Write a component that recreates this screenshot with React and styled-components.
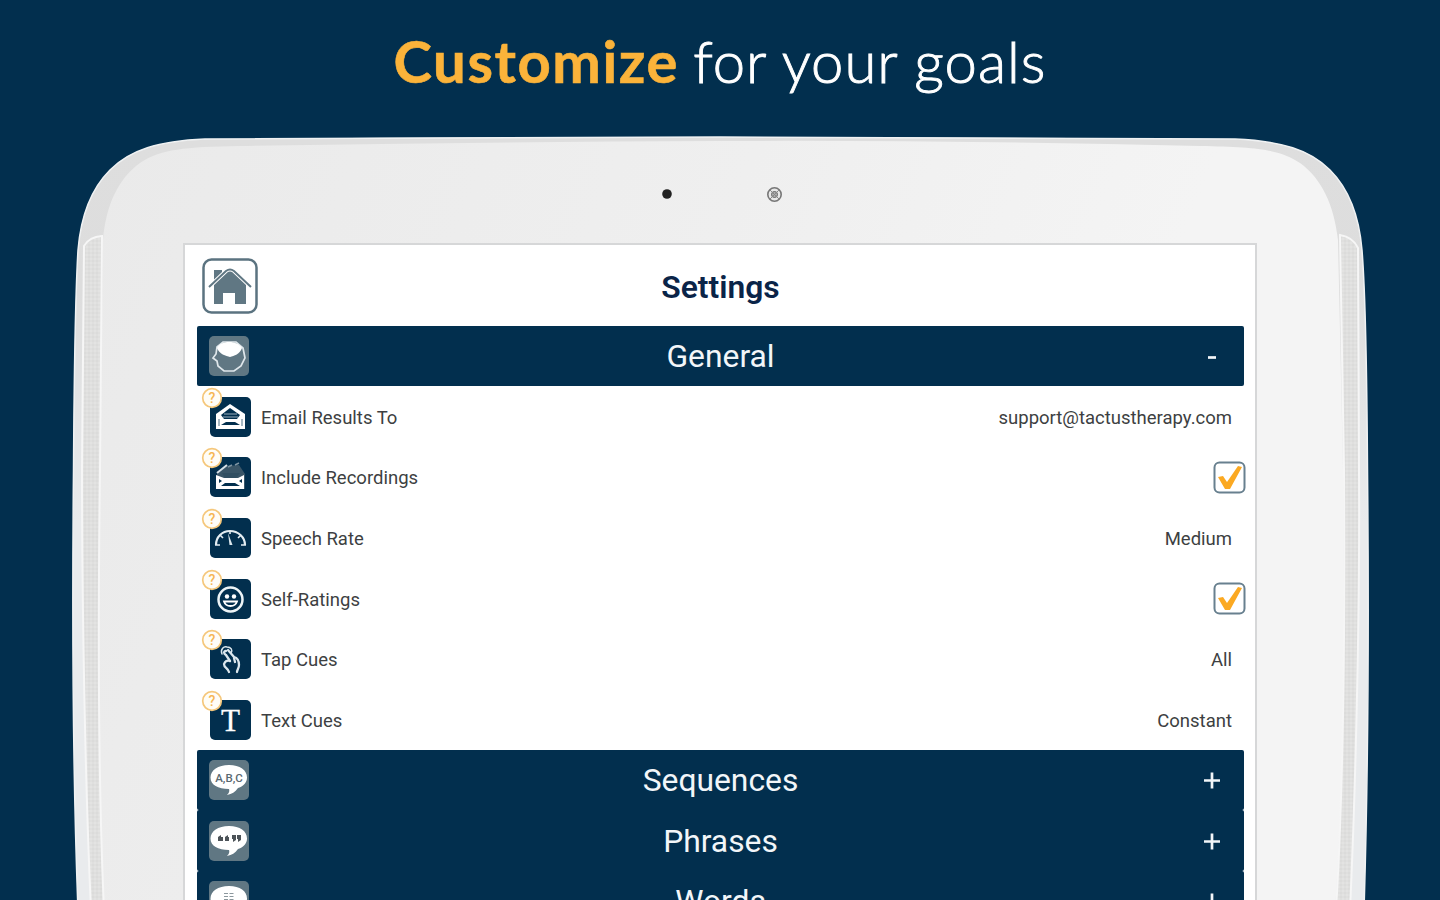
import React, { Fragment } from 'react'
import styled, { createGlobalStyle } from 'styled-components'

const NAVY = '#022f4e'
const SLATE = '#607783'
const ORANGE = '#fbb33a'

const GlobalStyle = createGlobalStyle`
  * {
    box-sizing: border-box;
  }
  body {
    margin: 0;
    background: ${NAVY};
    overflow: hidden;
  }
`
const Page = styled.main`
  display: flex;
  flex-direction: column;
  width: 1440px;
  height: 900px;
  overflow: hidden;
  background: ${NAVY};
  font-family: Roboto, 'Liberation Sans', sans-serif;
`
const Headline = styled.h1`
  display: flex;
  justify-content: center;
  gap: 14px;
  margin: 0;
  height: 130px;
  line-height: 122px;
  font-family: Lato, sans-serif;
  font-size: 58px;
  font-weight: 300;
  white-space: nowrap;
  color: #fff;
`
const Strong = styled.strong`
  font-weight: 700;
  letter-spacing: 1.6px;
  -webkit-text-stroke: 0.6px ${ORANGE};
  color: ${ORANGE};
`
const Rest = styled.span`
  letter-spacing: 1px;
  -webkit-text-stroke: 0.9px #fff;
`
const Tablet = styled.section`
  position: relative;
  flex: none;
  height: 770px;
  padding: 113px 183px 0;
`
const Body = styled.svg`
  position: absolute;
  top: 0;
  left: 0;
`
const Screen = styled.div`
  position: relative;
  width: 1074px;
  height: 657px;
  overflow: hidden;
  padding: 0 11px 0 12px;
  border: 2px solid #d6d7d8;
  border-bottom: 0;
  background: #fff;
`
const TopBar = styled.header`
  display: grid;
  grid-template-columns: 66px 1fr 66px;
  align-items: center;
  height: 81px;
`
const HomeButton = styled.button`
  width: 56px;
  height: 56px;
  margin-left: 5px;
  padding: 0;
  border: 0;
  background: none;
`
const Title = styled.h2`
  margin: 3px 0 0;
  font-size: 31.8px;
  font-weight: 600;
  text-align: center;
  color: #0a2448;
`
const Section = styled.div`
  display: grid;
  grid-template-columns: 66px 1fr 66px;
  align-items: center;
  height: ${props => props.$open ? 60 : 60.4}px;
  border-radius: 2px;
  color: #f2f6f9;
  background: ${NAVY};
`
const SectionIcon = styled.svg`
  width: 40px;
  height: 40px;
  margin: 0 0 0 12px;
`
const SectionName = styled.span`
  font-size: 31.8px;
  line-height: 36px;
  text-align: center;
`
const Toggle = styled.svg`
  width: 20px;
  height: 20px;
  margin-left: 24px;
`
const Row = styled.div`
  display: flex;
  align-items: center;
  height: 60.66px;
  padding: 1px 0 0 13px;
  font-size: 18.5px;
  color: #3d3f42;
`
const Tile = styled.div`
  position: relative;
  width: 41px;
  height: 40px;
  margin-right: 10px;
`
const Help = styled.svg`
  position: absolute;
  top: -10px;
  left: -9px;
`
const Label = styled.span`
  flex: 1;
  padding-top: 2px;
`
const Value = styled.span`
  margin-right: 12px;
  padding-top: 2px;
`
const Check = styled.svg`
  width: 33px;
  height: 33px;
  margin-right: -2px;
`

const glyphs = {
  mail: (
    <Fragment>
      <path d='M6 17 20 7l15 10v15H6z' fill='#fff' />
      <path d='M11 18 20 11l10 7-3 4H14z' fill={NAVY} />
      <path d='M14 17h13M13 20h15' stroke='#9cb0bd' strokeWidth='1' />
      <path d='M9 22v7M32 22v7' stroke='#8ba1b0' strokeWidth='1.5' />
      <path d='m11 28 5-3h9l5 3z' fill={NAVY} />
    </Fragment>
  ),
  recordings: (
    <Fragment>
      <path d='m7 17 10-8 12-1 6 9v15H6z' fill='#3a5668' />
      <path d='m7 16 10-8' stroke='#d6e0e6' strokeWidth='2' />
      <path d='M18 10l4-2M25 8l4-2' stroke='#7d93a1' strokeWidth='1.5' />
      <path d='m6 18 8 3h14l6-3v14H6z' fill='#fff' />
      <path d='M12 16h18l-4 5H15z' fill='#314f62' />
      <path d='m11 29 4-3h10l5 3zM9 22l3 2-3 2zM32 22l-3 2 3 2z' fill={NAVY} />
    </Fragment>
  ),
  gauge: (
    <Fragment>
      <path d='M6 27c0-8 6-14 14-14s15 6 15 14' fill='none' stroke='#e4edf2' strokeWidth='2.2' />
      <path d='M5 27h5M31 27h5M10 17l3 3M31 17l-3 3M20 13v3' stroke='#e4edf2' strokeWidth='1.6' />
      <path d='m18 15 1.5 12h3z' fill='#dbe6ec' />
    </Fragment>
  ),
  smile: (
    <Fragment>
      <circle cx='20.5' cy='20.5' r='12' fill='none' stroke='#edf4f7' strokeWidth='2.5' />
      <circle cx='17' cy='17.500' r='2.2' fill='#fff' />
      <circle cx='24' cy='17.500' r='2.2' fill='#fff' />
      <path d='M14 22.500c2 6 11 6 13 0z' fill='none' stroke='#fff' strokeWidth='1.8' />
    </Fragment>
  ),
  tap: (
    <g fill='none' stroke='#dce7ed' strokeWidth='2.3' strokeLinecap='round'>
      <path d='M12 15c-2-5 2-8 5-7 4 0 6 3 4 6' strokeWidth='1.5' />
      <path d='M16 12c-3 0-2 3 0 4l4 6M18 11l6 7c4 1 5 4 5 8 0 3-2 5-2 7' />
      <path d='M20 22c-3-1-5 0-6 3 0 4 4 4 5 8M24 19l1 4' />
    </g>
  ),
  text: (
    <text x='20.5' y='30.5' textAnchor='middle' fontFamily='Liberation Serif, serif' fontSize='31' fill='#fff' stroke='#fff' strokeWidth='.3' textLength='19' lengthAdjust='spacingAndGlyphs'>T</text>
  )
}

const rows = [
  { icon: 'mail', label: 'Email Results To', value: 'support@tactustherapy.com' },
  { icon: 'recordings', label: 'Include Recordings', checked: true },
  { icon: 'gauge', label: 'Speech Rate', value: 'Medium' },
  { icon: 'smile', label: 'Self-Ratings', checked: true },
  { icon: 'tap', label: 'Tap Cues', value: 'All' },
  { icon: 'text', label: 'Text Cues', value: 'Constant' }
]

const sections = [
  { name: 'Sequences', mark: 'letters' },
  { name: 'Phrases', mark: 'quotes' },
  { name: 'Words', mark: 'lines' }
]

const marks = {
  letters: <text x='20' y='21.500' textAnchor='middle' fontSize='11.500' fontWeight='500' fill='#596971'>A,B,C</text>,
  quotes: <path d='M9 20v-4l3-2v2h2v4zM16 20v-4l3-2v2h1v4zM23 14h4v5l-3 2v-3h-1zM28 14h4v5l-3 2v-3h-1z' fill='#4c5358' />,
  lines: <path d='M15 12.500h10M15 15.500h10M15 18.500h10' stroke='#8b979d' strokeWidth='1.200' strokeDasharray='4 1.500' />
}

const TabletBody = () => (
  <Body width='1440' height='770' viewBox='0 130 1440 770'>
    <defs>
      <linearGradient id='face' x1='0' y1='0' x2='1' y2='.25'>
        <stop offset='0' stopColor='#eaeaea' />
        <stop offset='.5' stopColor='#efefef' />
        <stop offset='.85' stopColor='#f4f4f4' />
      </linearGradient>
      <linearGradient id='rim' x1='0' y1='0' x2='0' y2='1'>
        <stop offset='0' stopColor='#dedede' />
        <stop offset='.2' stopColor='#dddddd' />
        <stop offset='.5' stopColor='#e9ebed' />
      </linearGradient>
      <pattern id='mesh' width='4' height='4' patternUnits='userSpaceOnUse'>
        <rect width='4' height='4' fill='#dfdfde' />
        <circle cx='1' cy='1' r='.8' fill='#d7d7d6' />
        <circle cx='3' cy='3' r='.8' fill='#e9e9e8' />
      </pattern>
    </defs>
    <path
      d='M78 910C73 780 72 620 73.500 470C74 390 75 300 78 250C81 214 92 188 110 170C130 150 158 141 205 139Q460 137 720 137T1235 139C1282 141 1310 150 1330 170C1348 188 1359 214 1362 250C1366 300 1367 390 1367.500 470C1369 620 1368 780 1364 910Z'
      fill='url(#rim)' stroke='#f0f2f3' strokeWidth='1.500'
    />
    <path
      d='M104 910C97 780 98 620 100 470L103 240C106 205 118 179 140 163C161 149 185 147 240 146Q480 142 720 141T1200 146C1255 147 1279 149 1300 163C1322 179 1334 205 1338 240L1343 470C1344 620 1344 780 1335 910Z'
      fill='url(#face)'
    />
    <path d='M91 910C85 780 82 600 82 470L84 246Q89 237 102 236L100 470C98 620 98 780 104 910Z' fill='url(#mesh)' stroke='#f6f6f6' strokeWidth='2' />
    <path d='M1350 910C1356 780 1360 600 1359 470L1358 248Q1353 237 1340 235L1344 470C1345 620 1344 780 1336 910Z' fill='url(#mesh)' stroke='#f6f6f6' strokeWidth='2' />
    <circle cx='667' cy='194' r='4.800' fill='#222' />
    <circle cx='774.500' cy='194.500' r='6.700' fill='#e8e8e8' stroke='#777' strokeWidth='1.600' />
    <circle cx='774.500' cy='194.500' r='3' fill='#aaa' stroke='#666' />
    <path d='m770 190 9 9m0-9-9 9' stroke='#888' />
  </Body>
)

const HomeIcon = () => (
  <svg width='56' height='56' viewBox='0 0 56 56'>
    <rect x='1.5' y='1.500' width='53' height='53' rx='8' fill='#fff' stroke='#5b7380' strokeWidth='2.500' />
    <path d='M12 12h8v5l8-6 16 14v21H33V35H21v11H12z' fill={SLATE} />
    <path d='M7 29 24 13q4-3 8 0l17 16' fill='none' stroke='#fff' strokeWidth='4' />
    <path d='M7 29 24 13q4-3 8 0l17 16' fill='none' stroke={SLATE} strokeWidth='2' />
  </svg>
)

const GeneralIcon = () => (
  <SectionIcon viewBox='0 0 40 40'>
    <rect width='40' height='40' rx='5' fill={SLATE} />
    <path d='m8 11 6-5h13l7 6 2 10-4 8-7 5H15l-6-5-1-5-4-3 3-4z' fill='none' stroke='#dfe7eb' strokeWidth='1.700' />
    <path d='M8 12C12 4 28 4 33 12C31 18 25 20 21 21C17 20 10 18 8 12z' fill='#fff' />
  </SectionIcon>
)

const BubbleIcon = ({ mark }) => (
  <SectionIcon viewBox='0 0 40 40'>
    <rect width='40' height='40' rx='5' fill={SLATE} />
    <path d='M20 5C9 5 1.500 10 1.500 17.500S9 29 20 29c1 3-1 5-2 6 5-1 8-3 11-7 6-2 9-6 9-10.500C38 10 31 5 20 5z' fill='#fff' />
    {marks[mark]}
  </SectionIcon>
)

const ToggleMark = ({ open }) => (
  <Toggle viewBox='0 0 20 20'>
    <path d={open ? 'M6 11.500h8' : 'M2 10.500h16M10 2.500v16'} stroke='#f2f6f9' strokeWidth='2.700' />
  </Toggle>
)

const SettingRow = ({ icon, label, value, checked }) => (
  <Row>
    <Tile>
      <svg width='41' height='40' viewBox='0 0 41 40'>
        <rect width='41' height='40' rx='5' fill={NAVY} />
        {glyphs[icon]}
      </svg>
      <Help width='22' height='22' viewBox='0 0 22 22'>
        <circle cx='11' cy='11' r='9.300' fill='#fffdf7' stroke='#f5c77b' strokeWidth='1.700' />
        <text x='11' y='16' textAnchor='middle' fontSize='14' fontWeight='500' fill='#f6b653'>?</text>
      </Help>
    </Tile>
    <Label>{label}</Label>
    {
      checked ? (
        <Check viewBox='0 0 33 33'>
          <rect x='1.500' y='1.500' width='30' height='30' rx='5' fill='#fff' stroke='#68808f' strokeWidth='2' />
          <path d='m5 16 5-1 4 6L25 5l4 1-12 22h-5z' fill='#fba922' />
        </Check>
      ) : <Value>{value}</Value>
    }
  </Row>
)

const App = () => (
  <Page>
    <GlobalStyle />
    <Headline>
      <Strong>Customize</Strong>
      <Rest>for your goals</Rest>
    </Headline>
    <Tablet>
      <TabletBody />
      <Screen>
        <TopBar>
          <HomeButton aria-label='Home'><HomeIcon /></HomeButton>
          <Title>Settings</Title>
        </TopBar>
        <Section $open>
          <GeneralIcon />
          <SectionName>General</SectionName>
          <ToggleMark open />
        </Section>
        {rows.map((row) => <SettingRow key={row.label} {...row} />)}
        {sections.map(({ name, mark }) => (
          <Section key={name}>
            <BubbleIcon mark={mark} />
            <SectionName>{name}</SectionName>
            <ToggleMark />
          </Section>
        ))}
      </Screen>
    </Tablet>
  </Page>
)

export default App
